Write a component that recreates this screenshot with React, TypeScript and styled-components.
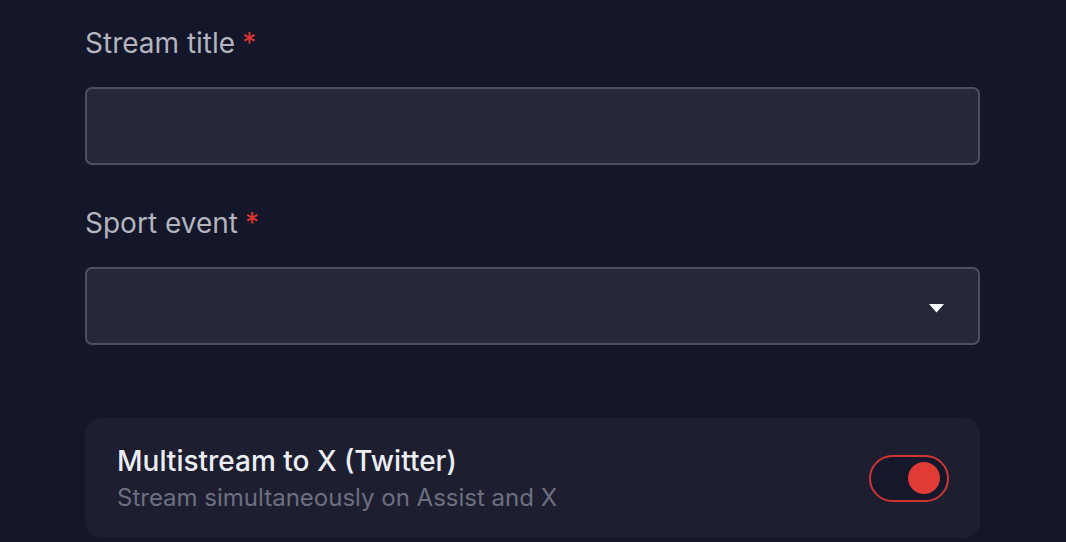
import React from "react";
import styled, { createGlobalStyle } from "styled-components";

const Global = createGlobalStyle`
  html, body { margin: 0; padding: 0; background: #14162a; }
  body { font-family: Inter, "Noto Sans", sans-serif; }
`;

const Page = styled.div`
  width: 1066px;
  height: 542px;
  overflow: hidden;
  background: #14162a;
  box-sizing: border-box;
  padding: 26px 86px 0 85px;
  display: flex;
  flex-direction: column;
`;

const Field = styled.div<{ $mb: number }>`
  display: flex;
  flex-direction: column;
  gap: 27px;
  margin-bottom: ${(p) => p.$mb}px;
`;

const Label = styled.label`
  font-size: 28px;
  line-height: 34px;
  color: #b3b4bd;
  font-weight: 400;
`;

const Req = styled.span`
  color: #e0342f;
  margin-left: 7px;
`;

const Input = styled.div`
  height: 78px;
  box-sizing: border-box;
  border: 2px solid #4d4f61;
  border-radius: 7px;
  background: #252839;
  display: flex;
  align-items: center;
  justify-content: flex-end;
  padding-right: 34px;
  padding-top: 4px;
`;

const Card = styled.div`
  height: 120px;
  box-sizing: border-box;
  border-radius: 16px;
  background: #1d1f31;
  display: flex;
  align-items: center;
  justify-content: space-between;
  padding: 0 31px 0 32px;
`;

const Texts = styled.div`
  display: flex;
  flex-direction: column;
  gap: 5px;
`;

const Title = styled.div`
  font-size: 28px;
  font-weight: 500;
  color: #eceef2;
  line-height: 34px;
`;

const Sub = styled.div`
  font-size: 24px;
  color: #6d6f80;
  line-height: 30px;
`;

const Toggle = styled.div`
  width: 80px;
  height: 47px;
  box-sizing: border-box;
  border: 2px solid #cf3434;
  border-radius: 24px;
  background: #15172a;
  display: flex;
  align-items: center;
  justify-content: flex-end;
  padding-right: 7px;
`;

const Knob = styled.div`
  width: 32px;
  height: 32px;
  border-radius: 50%;
  background: #e13b36;
`;

export default function App() {
  return (
    <>
      <Global />
      <Page>
        <Field $mb={41}>
          <Label>
            Stream title<Req>*</Req>
          </Label>
          <Input />
        </Field>
        <Field $mb={73}>
          <Label>
            Sport event<Req>*</Req>
          </Label>
          <Input>
            <svg width="15" height="9" viewBox="0 0 15 9">
              <path d="M0 0 H15 L7.5 8.5 Z" fill="#ffffff" />
            </svg>
          </Input>
        </Field>
        <Card>
          <Texts>
            <Title>Multistream to X (Twitter)</Title>
            <Sub>Stream simultaneously on Assist and X</Sub>
          </Texts>
          <Toggle>
            <Knob />
          </Toggle>
        </Card>
      </Page>
    </>
  );
}
